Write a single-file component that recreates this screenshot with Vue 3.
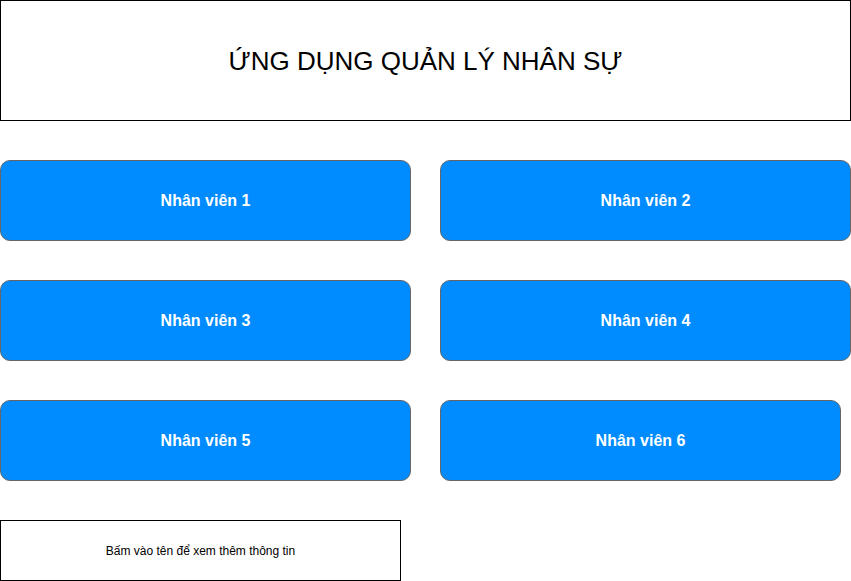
<script setup>
const employees = [1, 2, 3, 4, 5, 6]
</script>

<template>
  <main class="app">
    <header class="header">
      <h1 class="title">ỨNG DỤNG QUẢN LÝ NHÂN SỰ</h1>
    </header>
    <section class="grid">
      <button v-for="n in employees" :key="n" type="button" class="employee">Nhân viên {{ n }}</button>
    </section>
    <p class="hint">Bấm vào tên để xem thêm thông tin</p>
  </main>
</template>

<style>
body {
  background: #fff;
}
</style>

<style scoped>
.app {
  display: flex;
  flex-direction: column;
  gap: 39px;
  font-family: "Liberation Sans", Arial, sans-serif;
  color: #000;
}
.header {
  box-sizing: border-box;
  display: flex;
  align-items: center;
  justify-content: center;
  min-height: 121px;
  border: 1px solid #000;
}
.title {
  margin: 0;
  font-size: 26px;
  font-weight: 400;
  line-height: 32px;
}
.grid {
  display: grid;
  grid-template-columns: 1fr 1fr;
  gap: 39px 29px;
}
.employee {
  box-sizing: border-box;
  min-height: 81px;
  padding: 0 16px;
  border: 1px solid #666;
  border-radius: 10px;
  background: #008cff;
  color: #fff;
  font-family: inherit;
  font-size: 16px;
  font-weight: 700;
  line-height: 20px;
  cursor: pointer;
}
.employee:last-child {
  margin-right: 10px;
}
.hint {
  box-sizing: border-box;
  display: flex;
  align-items: center;
  justify-content: center;
  width: 100%;
  max-width: 401px;
  min-height: 61px;
  margin: 0;
  border: 1px solid #000;
  font-size: 12px;
  line-height: 16px;
}
</style>
